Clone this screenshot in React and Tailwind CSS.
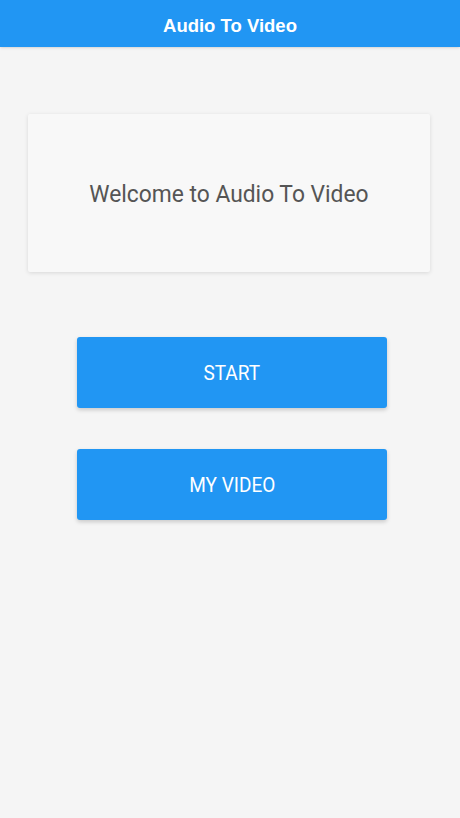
export default function App() {
  return (
    <div className="min-h-[818px] bg-[#f5f5f5] flex flex-col">
      <header className="h-[47px] bg-[#2196f3] flex items-center justify-center pt-[5px] shadow-sm">
        <h1 className="text-white text-[18.5px] font-bold font-['Liberation_Sans',Arial,sans-serif]">
          Audio To Video
        </h1>
      </header>

      <div className="mt-[67px] ml-[28px] w-[402px] h-[158px] bg-[#f8f8f8] rounded-[2px] shadow-[0_1px_4px_rgba(0,0,0,0.12)] flex items-center justify-center">
        <p className="text-[#555555] text-[24px] scale-x-[0.95] pt-[2px] font-['Roboto',sans-serif]">
          Welcome to Audio To Video
        </p>
      </div>

      <div className="mt-[65px] flex flex-col items-center gap-[41px] pl-[4px]">
        <button className="w-[310px] h-[71px] bg-[#2196f3] rounded-[3px] text-white text-[20px] font-['Roboto',sans-serif] shadow-[0_2px_4px_rgba(0,0,0,0.18)]">
          <span className="inline-block scale-x-[0.95]">START</span>
        </button>
        <button className="w-[310px] h-[71px] bg-[#2196f3] rounded-[3px] text-white text-[20px] font-['Roboto',sans-serif] shadow-[0_2px_4px_rgba(0,0,0,0.18)]">
          <span className="inline-block scale-x-[0.95]">MY VIDEO</span>
        </button>
      </div>
    </div>
  );
}
